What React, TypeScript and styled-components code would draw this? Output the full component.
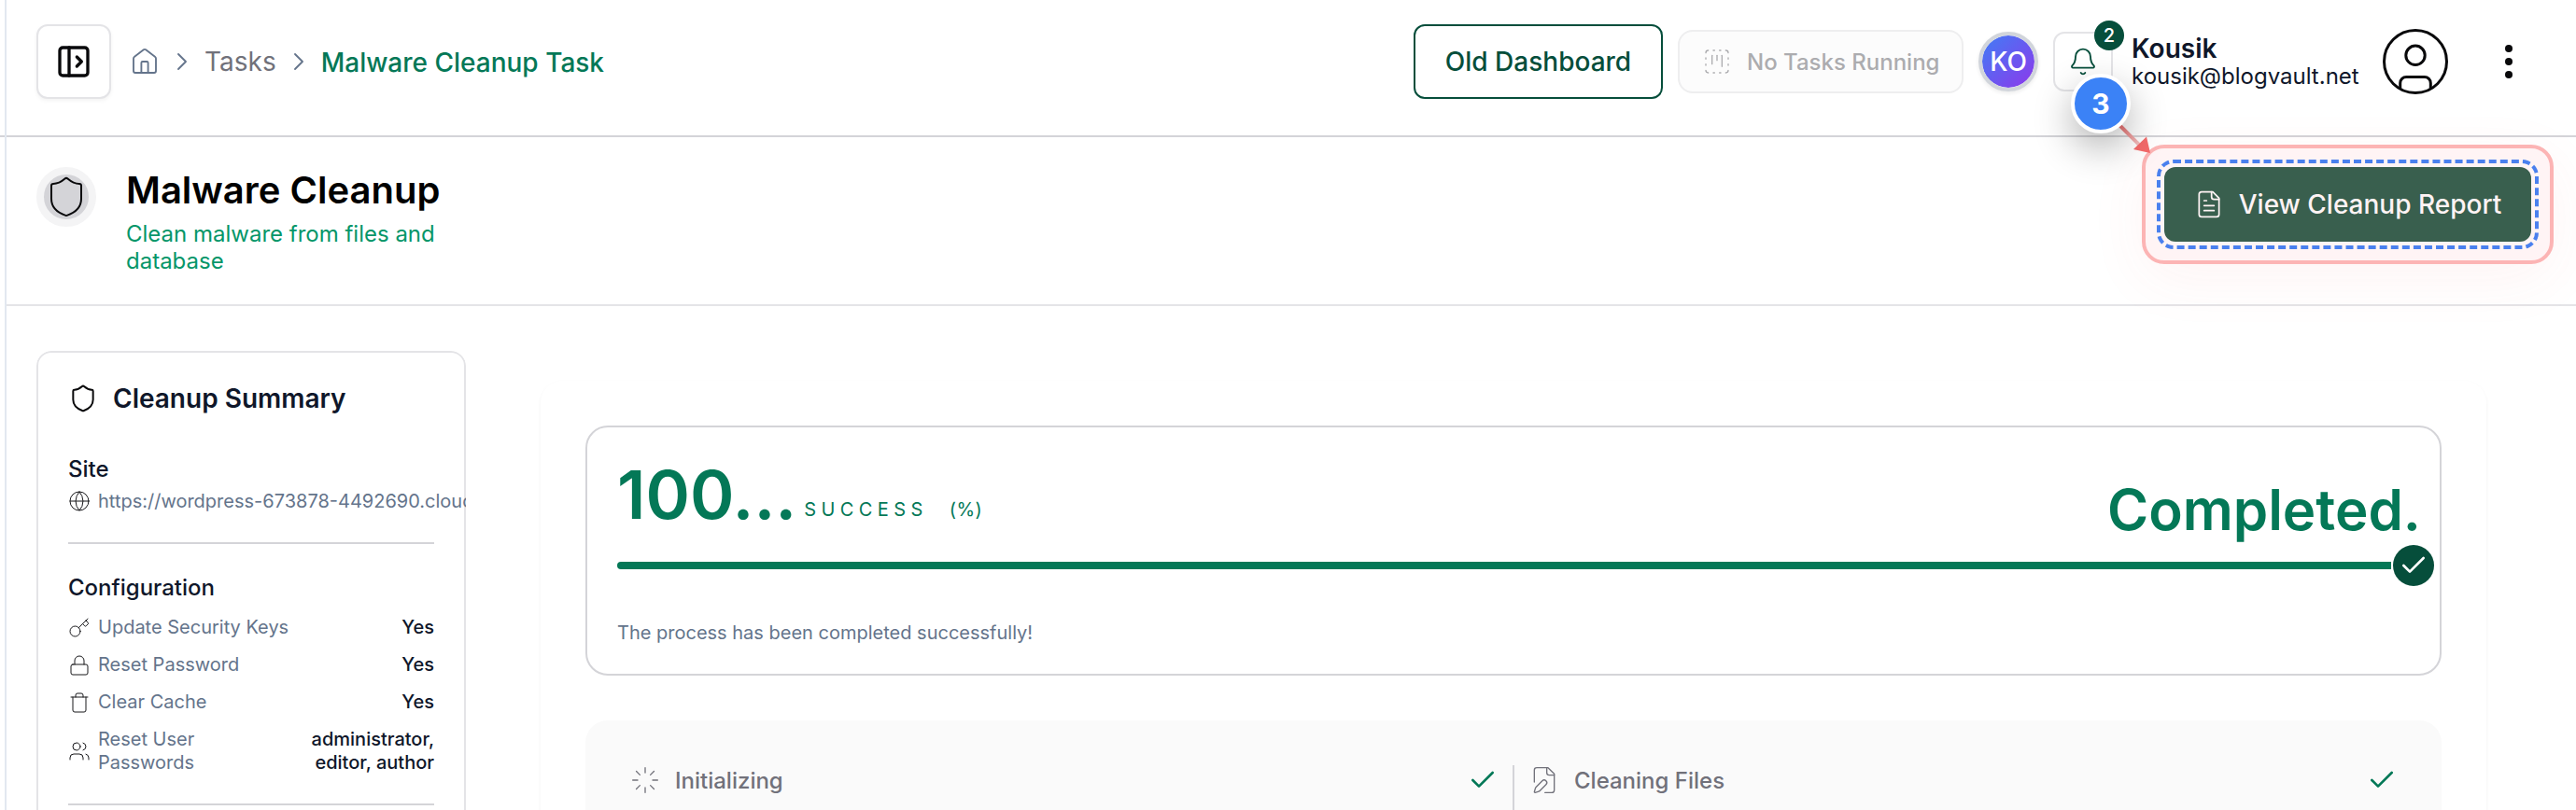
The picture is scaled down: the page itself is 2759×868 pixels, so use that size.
import React from "react";
import styled, { createGlobalStyle } from "styled-components";
import {
  Bell,
  Check,
  ChevronRight,
  Globe,
  Key,
  Loader,
  Lock,
  PanelLeftOpen,
  Shield,
  SquareDashedKanban,
  Trash,
  Users,
} from "lucide-react";

const GlobalStyle = createGlobalStyle`
  *, *::before, *::after { box-sizing: border-box; }
  body { margin: 0; background: #fff; }
`;

const Page = styled.div`
  display: flex;
  height: 868px;
  overflow: hidden;
  background: #fff;
  color: #0f172a;
  font-family: Inter, "Liberation Sans", sans-serif;
`;

const Gutter = styled.div`
  width: 5px;
  height: 147px;
  border-bottom: 2px solid #d4d4d8;
  flex: none;
`;

const Main = styled.main`
  flex: 1;
  min-width: 0;
  border-left: 2px solid #e2e8f0;
`;

const Header = styled.header`
  display: flex;
  align-items: flex-start;
  justify-content: space-between;
  height: 147px;
  padding: 26px 56px 0 32px;
  border-bottom: 2px solid #d4d4d8;
`;

const HeaderGroup = styled.div`
  display: flex;
  align-items: center;
  height: 80px;
`;

const ToggleButton = styled.button`
  display: flex;
  align-items: center;
  justify-content: center;
  width: 80px;
  height: 80px;
  padding: 0;
  margin-right: 20px;
  border: 2px solid #e4e4e7;
  border-radius: 12px;
  background: #fff;
  box-shadow: 0 2px 4px rgba(0, 0, 0, 0.05);
  color: #09090b;
`;

const Breadcrumb = styled.nav`
  display: flex;
  align-items: center;
  gap: 8px;
  color: #64748b;
  svg { flex: none; }
`;

const Crumb = styled.span<{ $current?: boolean }>`
  font-size: 28px;
  line-height: 36px;
  white-space: nowrap;
  font-weight: ${(p) => (p.$current ? 500 : 400)};
  color: ${(p) => (p.$current ? "#047857" : "#71717a")};
  padding-top: ${(p) => (p.$current ? "2px" : "0")};
`;

const OldDashboard = styled.button`
  width: 267px;
  height: 80px;
  padding: 0;
  margin-right: 16px;
  border: 2px solid #064e3b;
  border-radius: 12px;
  background: #fff;
  color: #064e3b;
  font: 500 28px/36px Inter, sans-serif;
  white-space: nowrap;
`;

const TaskStatus = styled.div`
  display: flex;
  align-items: center;
  gap: 16px;
  width: 306px;
  height: 68px;
  padding-left: 24px;
  margin-right: 16px;
  border: 2px solid #eeeeef;
  border-radius: 16px;
  background: #fcfcfc;
  color: #acacaf;
  font-size: 24px;
  font-weight: 500;
  white-space: nowrap;
`;

const Initials = styled.div`
  display: flex;
  align-items: center;
  justify-content: center;
  width: 64px;
  height: 64px;
  margin-right: 16px;
  border-radius: 50%;
  border: 4px solid #d1d5db;
  background: linear-gradient(135deg, #3b82f6, #9333ea) border-box;
  background-clip: padding-box;
  box-shadow: 0 2px 4px rgba(0, 0, 0, 0.08);
  color: #fff;
  font-size: 28px;
  font-weight: 500;
`;

const BellButton = styled.div`
  position: relative;
  display: flex;
  align-items: center;
  justify-content: center;
  width: 64px;
  height: 64px;
  margin-right: 20px;
  border: 2px solid #e4e4e7;
  border-radius: 12px;
  background: #fff;
  color: #064e3b;
`;

const Badge = styled.span`
  position: absolute;
  top: -14px;
  right: -14px;
  display: flex;
  align-items: center;
  justify-content: center;
  width: 32px;
  height: 32px;
  border-radius: 50%;
  background: #064e3b;
  color: #fff;
  font-size: 20px;
  font-weight: 500;
`;

const StepMarker = styled.span`
  position: absolute;
  z-index: 3;
  top: 43px;
  left: 17px;
  display: flex;
  align-items: center;
  justify-content: center;
  width: 64px;
  height: 64px;
  border-radius: 50%;
  border: 4px solid #fff;
  background: #3b82f6;
  box-shadow: 0 16px 40px rgba(0, 0, 0, 0.3);
  color: #fff;
  font-size: 30px;
  font-weight: 700;
`;

const MarkerArrow = styled.svg`
  position: absolute;
  z-index: 2;
  top: 96px;
  left: 64px;
`;

const UserInfo = styled.div`
  width: 269px;
  white-space: nowrap;
`;

const UserName = styled.div`
  font-size: 28px;
  line-height: 32px;
  font-weight: 600;
`;

const UserMail = styled.div`
  font-size: 24px;
  line-height: 28px;
`;

const MenuDots = styled.svg`
  margin-left: 49px;
`;

const TitleBar = styled.section`
  display: flex;
  justify-content: space-between;
  height: 181px;
  padding: 32px 48px 0 32px;
  border-bottom: 2px solid #e4e4e7;
`;

const TitleGroup = styled.div`
  display: flex;
  align-items: flex-start;
  gap: 32px;
`;

const ShieldRing = styled.div`
  display: flex;
  align-items: center;
  justify-content: center;
  width: 64px;
  height: 64px;
  border: 8px solid #f4f4f5;
  border-radius: 50%;
  background: #d4d4d8;
  color: #09090b;
  svg { flex: none; }
`;

const Title = styled.h1`
  margin: 0;
  color: #000;
  font-size: 40px;
  line-height: 50px;
  font-weight: 600;
`;

const Subtitle = styled.p`
  width: 360px;
  margin: 7px 0 0;
  color: #059669;
  font-size: 24px;
  line-height: 29px;
`;

const ReportSpot = styled.div`
  position: relative;
  width: 393px;
  height: 80px;
`;

const SpotFrame = styled.div`
  position: absolute;
  inset: -24px;
  border: 4px solid #fcb4b4;
  border-radius: 24px;
  background: #fff4f5;
  box-shadow: 0 16px 64px rgba(239, 68, 68, 0.06);
`;

const SpotDash = styled.div`
  position: absolute;
  inset: -8px;
  border: 4px dashed #4a80ee;
  border-radius: 18px;
`;

const ReportButton = styled.button`
  position: relative;
  display: flex;
  align-items: center;
  justify-content: center;
  gap: 16px;
  width: 100%;
  height: 100%;
  padding: 0;
  border: 0;
  border-radius: 12px;
  background: #395f4e;
  color: #fff3f4;
  font: 500 28px/36px Inter, sans-serif;
  white-space: nowrap;
`;

const Content = styled.div`
  display: flex;
  align-items: flex-start;
  padding: 48px 96px 0 32px;
`;

const SummaryCard = styled.aside`
  width: 460px;
  height: 600px;
  flex: none;
  margin-right: 80px;
  padding: 33px 32px;
  border: 2px solid #e4e4e7;
  border-radius: 16px;
  clip-path: inset(0 round 16px);
`;

const SummaryTitle = styled.h2`
  display: flex;
  align-items: center;
  gap: 16px;
  height: 32px;
  margin: 0 0 44px;
  font-size: 28px;
  line-height: 32px;
  font-weight: 600;
  svg { color: #09090b; }
`;

const SectionTitle = styled.h3`
  margin: 0;
  font-size: 24px;
  line-height: 32px;
  font-weight: 500;
`;

const SiteRow = styled.div`
  display: flex;
  align-items: center;
  gap: 8px;
  height: 24px;
  margin-top: 6px;
  color: #64748b;
  font-size: 20px;
  line-height: 24px;
  white-space: nowrap;
  svg { flex: none; color: #18181b; }
`;

const Divider = styled.hr<{ $top?: number }>`
  height: 2px;
  margin: ${(p) => p.$top ?? 32}px 0 31px;
  border: 0;
  background: #d4d4d8;
`;

const ConfigList = styled.div`
  display: flex;
  flex-direction: column;
  gap: 15px;
  margin-top: 14px;
`;

const ConfigRow = styled.div`
  display: flex;
  align-items: center;
  font-size: 20px;
  line-height: 25px;
  svg { flex: none; color: #18181b; }
`;

const ConfigLabel = styled.span<{ $narrow?: boolean }>`
  margin-left: 8px;
  width: ${(p) => (p.$narrow ? "130px" : "auto")};
  color: #64748b;
`;

const ConfigValue = styled.span`
  width: 140px;
  margin-left: auto;
  text-align: right;
  font-weight: 500;
`;

const Panel = styled.section`
  flex: 1;
  min-width: 0;
  height: 600px;
  margin-top: 32px;
  padding: 48px;
  border-radius: 24px;
  box-shadow: 0 2px 4px rgba(0, 0, 0, 0.05);
`;

const ProgressCard = styled.div`
  height: 268px;
  padding: 0 32px;
  border: 2px solid #d4d4d8;
  border-radius: 24px;
`;

const ProgressHead = styled.div`
  display: flex;
  justify-content: space-between;
  align-items: flex-start;
  height: 144px;
  color: #047857;
  white-space: nowrap;
`;

const Percent = styled.div`
  display: flex;
  align-items: baseline;
  padding-top: 28px;
  font-size: 72px;
  line-height: 88px;
  font-weight: 600;
`;

const PercentLabel = styled.span<{ $tracking: number; $left: number }>`
  position: relative;
  top: -3px;
  margin-left: ${(p) => p.$left}px;
  font-size: 20px;
  font-weight: 400;
  letter-spacing: ${(p) => p.$tracking}px;
`;

const StatusText = styled.div`
  padding-top: 50px;
  margin-right: -12px;
  font-size: 60px;
  line-height: 76px;
  font-weight: 600;
`;

const Track = styled.div`
  display: flex;
  align-items: center;
  height: 8px;
  margin-right: -26px;
`;

const TrackFill = styled.div`
  flex: 1;
  height: 8px;
  border-radius: 4px 0 0 4px;
  background: #047857;
`;

const TrackEnd = styled.div`
  display: flex;
  align-items: center;
  justify-content: center;
  width: 44px;
  height: 44px;
  margin-left: 2px;
  border-radius: 50%;
  background: #064e3b;
  color: #fff;
`;

const Message = styled.p`
  margin: 56px 0 0;
  color: #64748b;
  font-size: 20px;
  line-height: 24px;
`;

const Steps = styled.div`
  display: grid;
  grid-template-columns: 947px 1fr;
  margin-top: 48px;
  padding: 48px;
  height: 300px;
  border-radius: 24px;
  background: #fafafa;
`;

const Step = styled.div<{ $divided?: boolean }>`
  display: flex;
  align-items: flex-start;
  gap: 16px;
  padding: ${(p) => (p.$divided ? "0 16px 0 0" : "0 0 0 16px")};
  border-right: ${(p) => (p.$divided ? "2px solid #d4d4d8" : "0")};
  color: #71717a;
  font-size: 24px;
  line-height: 33px;
  font-weight: 500;
`;

const StepDone = styled(Check)`
  margin-left: auto;
  color: #047857;
`;

const HomeIcon = () => (
  <svg width="32" height="32" viewBox="0 0 24 24" fill="none" stroke="currentColor" strokeWidth="1.4" strokeLinecap="round" strokeLinejoin="round">
    <path d="M4.5 21h15a1.5 1.5 0 0 0 1.5-1.5V9.6a2 2 0 0 0-.8-1.6l-7.3-5.5a1.5 1.5 0 0 0-1.8 0L3.8 8A2 2 0 0 0 3 9.6v9.9A1.5 1.5 0 0 0 4.5 21z" />
    <path d="M9.3 21v-8a1 1 0 0 1 1-1h3.4a1 1 0 0 1 1 1v8" />
  </svg>
);

const ReportIcon = () => (
  <svg width="32" height="32" viewBox="0 0 24 24" fill="none" stroke="currentColor" strokeWidth="1.3" strokeLinecap="round" strokeLinejoin="round">
    <path d="M15 2H6a2 2 0 0 0-2 2v16a2 2 0 0 0 2 2h12a2 2 0 0 0 2-2V7Z" />
    <path d="M14 2v4a2 2 0 0 0 2 2h4" />
    <path d="M10 9H8M16 13H8M16 17H8" />
  </svg>
);

const EditFileIcon = () => (
  <svg width="32" height="32" viewBox="0 0 24 24" fill="none" stroke="currentColor" strokeWidth="1" strokeLinecap="round" strokeLinejoin="round">
    <path d="M12.5 22H18a2 2 0 0 0 2-2V7l-5-5H6a2 2 0 0 0-2 2v9.5" />
    <path d="M14 2v4a2 2 0 0 0 2 2h4" />
    <path d="M13.378 15.626a1 1 0 1 0-3.004-3.004l-5.01 5.012a2 2 0 0 0-.506.854l-.837 2.87a.5.5 0 0 0 .62.62l2.87-.837a2 2 0 0 0 .854-.506z" />
  </svg>
);

const AccountIcon = () => (
  <svg width="70" height="70" viewBox="0 0 70 70" fill="none" stroke="#09090b" strokeWidth="3">
    <circle cx="35" cy="35" r="33.5" />
    <circle cx="35" cy="28.3" r="10.2" />
    <path d="M18.7 64V58a6.5 6.5 0 0 1 6.5-6.5h19.6a6.5 6.5 0 0 1 6.5 6.5v6" />
  </svg>
);

const config = [
  { icon: Key, label: "Update Security Keys", value: "Yes" },
  { icon: Lock, label: "Reset Password", value: "Yes" },
  { icon: Trash, label: "Clear Cache", value: "Yes" },
  { icon: Users, label: "Reset User Passwords", value: "administrator, editor, author", narrow: true },
];

export default function App() {
  return (
    <Page>
      <GlobalStyle />
      <Gutter />
      <Main>
        <Header>
          <HeaderGroup>
            <ToggleButton aria-label="Open sidebar">
              <PanelLeftOpen size={40} strokeWidth={2} />
            </ToggleButton>
            <Breadcrumb>
              <HomeIcon />
              <ChevronRight size={32} strokeWidth={1.4} />
              <Crumb>Tasks</Crumb>
              <ChevronRight size={32} strokeWidth={1.4} />
              <Crumb $current>Malware Cleanup Task</Crumb>
            </Breadcrumb>
          </HeaderGroup>
          <HeaderGroup>
            <OldDashboard>Old Dashboard</OldDashboard>
            <TaskStatus>
              <SquareDashedKanban size={32} strokeWidth={1} />
              No Tasks Running
            </TaskStatus>
            <Initials>KO</Initials>
            <BellButton>
              <Bell size={32} strokeWidth={1.4} />
              <Badge>2</Badge>
              <MarkerArrow width="44" height="40" viewBox="2265 132 44 40">
                <defs>
                  <linearGradient id="shaft" gradientUnits="userSpaceOnUse" x1="2272" y1="136" x2="2293" y2="157">
                    <stop offset="0" stopColor="#ea7777" />
                    <stop offset="1" stopColor="#f3c8c8" />
                  </linearGradient>
                </defs>
                <path d="M2270 134 2292 156" stroke="url(#shaft)" strokeWidth="4" />
                <path d="M2303 164 2299 146.5 2285 160Z" fill="#f46a6a" />
              </MarkerArrow>
              <StepMarker>3</StepMarker>
            </BellButton>
            <UserInfo>
              <UserName>Kousik</UserName>
              <UserMail>kousik@blogvault.net</UserMail>
            </UserInfo>
            <AccountIcon />
            <MenuDots width="32" height="40" viewBox="0 0 32 40" fill="#09090b">
              <circle cx="16" cy="6" r="4" />
              <circle cx="16" cy="20" r="4" />
              <circle cx="16" cy="34" r="4" />
            </MenuDots>
          </HeaderGroup>
        </Header>

        <TitleBar>
          <TitleGroup>
            <ShieldRing>
              <Shield size={48} strokeWidth={1} />
            </ShieldRing>
            <div>
              <Title>Malware Cleanup</Title>
              <Subtitle>Clean malware from files and database</Subtitle>
            </div>
          </TitleGroup>
          <ReportSpot>
            <SpotFrame />
            <SpotDash />
            <ReportButton>
              <ReportIcon />
              View Cleanup Report
            </ReportButton>
          </ReportSpot>
        </TitleBar>

        <Content>
          <SummaryCard>
            <SummaryTitle>
              <Shield size={32} strokeWidth={1.5} />
              Cleanup Summary
            </SummaryTitle>
            <SectionTitle>Site</SectionTitle>
            <SiteRow>
              <Globe size={24} strokeWidth={1} />
              https://wordpress-673878-4492690.cloudwaysapps.com
            </SiteRow>
            <Divider />
            <SectionTitle>Configuration</SectionTitle>
            <ConfigList>
              {config.map(({ icon: Icon, label, value, narrow }) => (
                <ConfigRow key={label}>
                  <Icon size={24} strokeWidth={1} />
                  <ConfigLabel $narrow={narrow}>{label}</ConfigLabel>
                  <ConfigValue>{value}</ConfigValue>
                </ConfigRow>
              ))}
            </ConfigList>
            <Divider $top={31} />
          </SummaryCard>

          <Panel>
            <ProgressCard>
              <ProgressHead>
                <Percent>
                  100...
                  <PercentLabel $tracking={5.4} $left={8}>SUCCESS</PercentLabel>
                  <PercentLabel $tracking={0.4} $left={23}>(%)</PercentLabel>
                </Percent>
                <StatusText>Completed.</StatusText>
              </ProgressHead>
              <Track>
                <TrackFill />
                <TrackEnd>
                  <Check size={32} strokeWidth={2} />
                </TrackEnd>
              </Track>
              <Message>The process has been completed successfully!</Message>
            </ProgressCard>
            <Steps>
              <Step $divided>
                <Loader size={32} strokeWidth={1} />
                Initializing
                <StepDone size={32} strokeWidth={2} />
              </Step>
              <Step>
                <EditFileIcon />
                Cleaning Files
                <StepDone size={32} strokeWidth={2} />
              </Step>
            </Steps>
          </Panel>
        </Content>
      </Main>
    </Page>
  );
}
